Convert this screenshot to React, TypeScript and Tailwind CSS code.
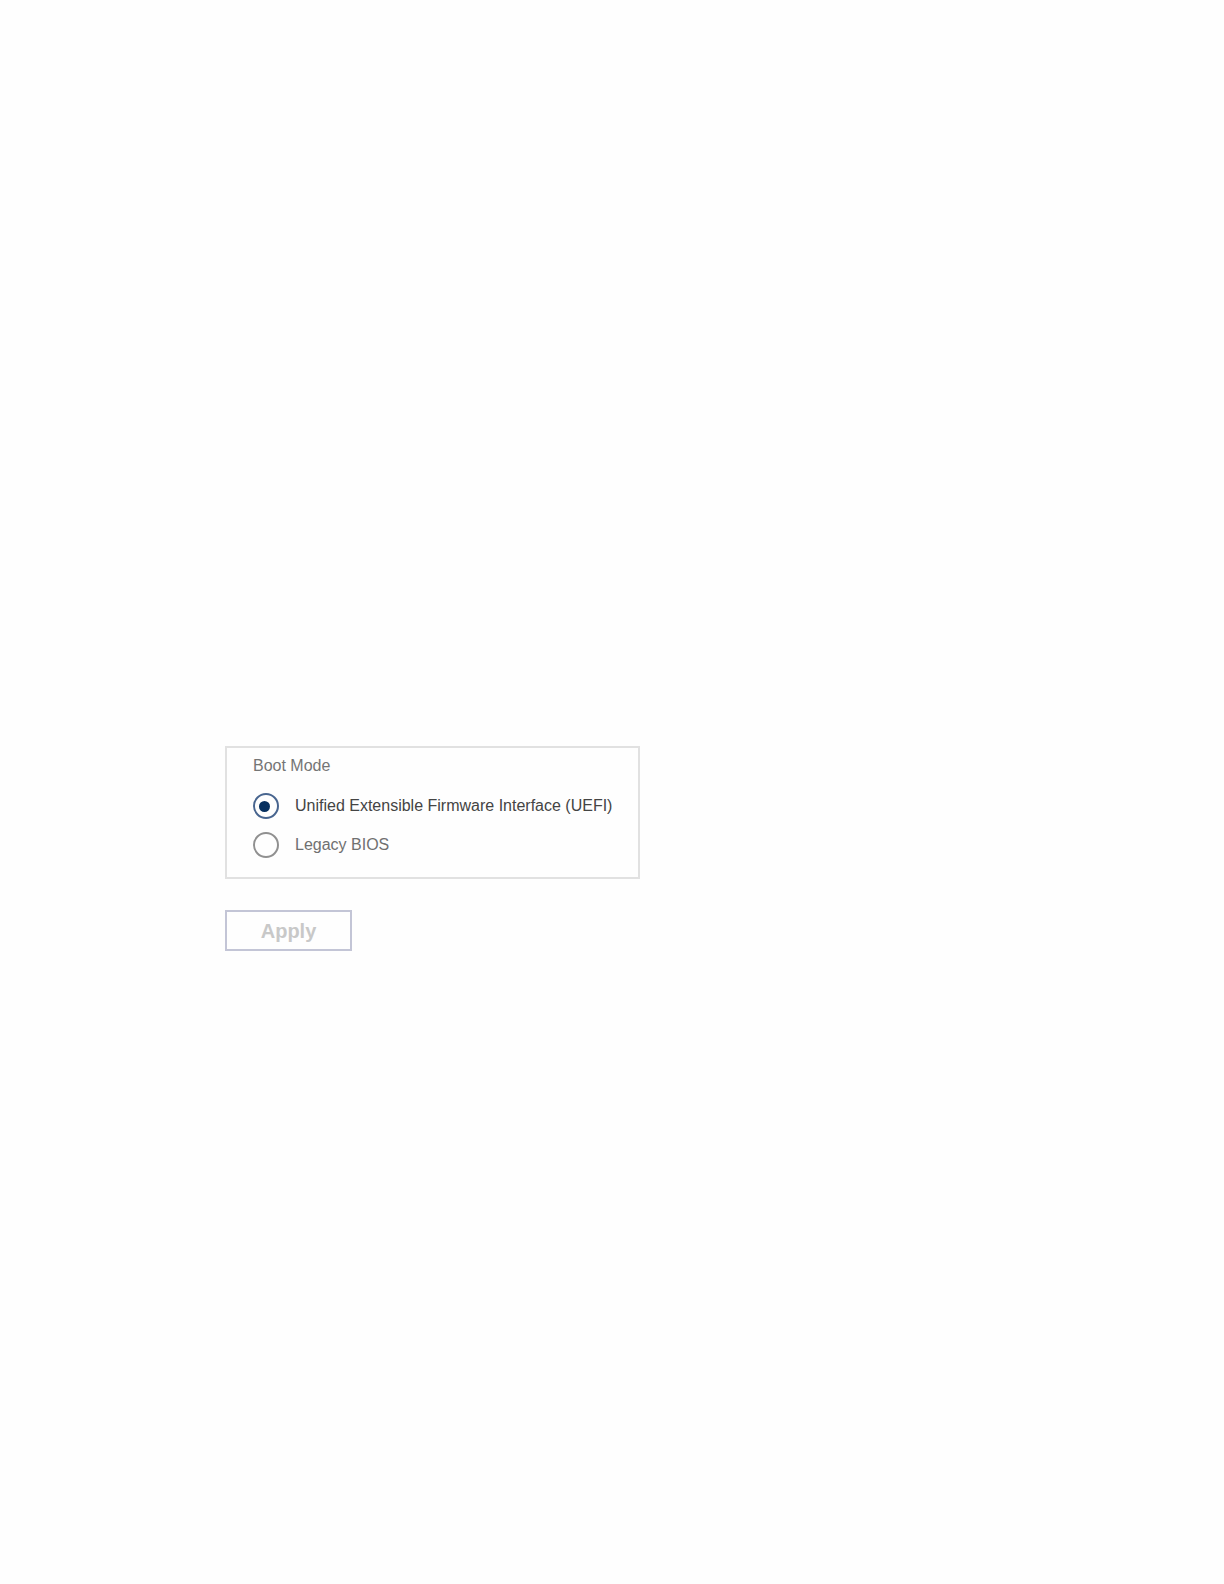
import { useState } from "react";

const bootModes = [
  { value: "uefi", label: "Unified Extensible Firmware Interface (UEFI)" },
  { value: "legacy", label: "Legacy BIOS" },
];

export default function App() {
  const [mode, setMode] = useState("uefi");

  return (
    <main className="min-h-screen bg-[#fefefe] pt-[746px] pl-[225px] font-['Liberation_Sans',Arial,sans-serif]">
      <form onSubmit={(e) => e.preventDefault()}>
        {/* Boot mode choices */}
        <div
          role="radiogroup"
          aria-labelledby="boot-mode"
          className="w-fit border-2 border-[#e1e1e1] px-[26px] pt-2 pb-[19px]"
        >
          <h2 id="boot-mode" className="mb-[17px] text-[16px] leading-5 text-[#757575]">
            Boot Mode
          </h2>
          <div className="flex flex-col gap-[13px]">
            {bootModes.map((item) => (
              <label
                key={item.value}
                className="flex items-center gap-4 text-[16px] leading-[26px] text-[#707070] has-checked:text-[#444]"
              >
                <input
                  type="radio"
                  name="boot-mode"
                  value={item.value}
                  checked={mode === item.value}
                  onChange={() => setMode(item.value)}
                  className="grid size-[26px] shrink-0 appearance-none place-items-center rounded-full border-2 border-[#909090] checked:border-[#48658f] checked:pr-[3px] checked:before:size-[11px] checked:before:rounded-full checked:before:bg-[#07305f] checked:before:content-['']"
                />
                {item.label}
              </label>
            ))}
          </div>
        </div>

        <button
          type="submit"
          disabled
          className="mt-[31px] h-[41px] w-[127px] border-2 border-[#c3c5d6] text-[20px] leading-6 font-bold text-[#c8c8c8]"
        >
          Apply
        </button>
      </form>
    </main>
  );
}
